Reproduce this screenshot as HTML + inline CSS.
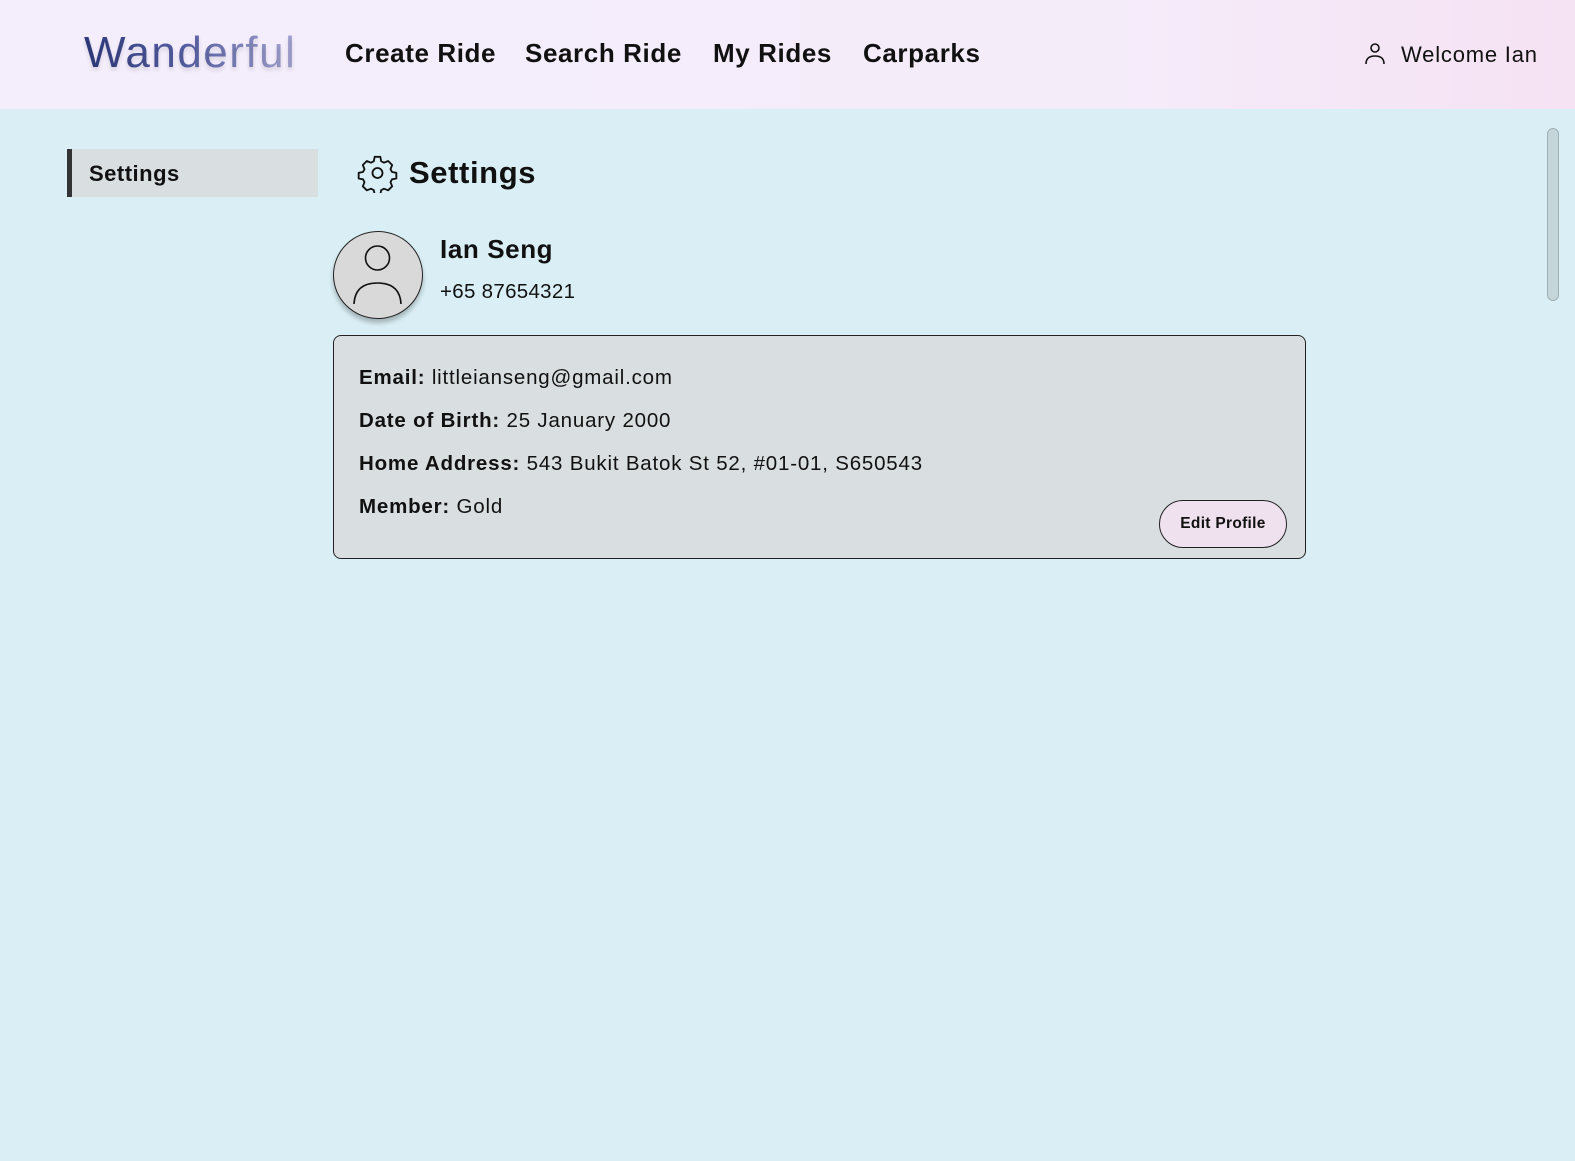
<!DOCTYPE html>
<html><head><meta charset="utf-8"><style>
*{margin:0;padding:0;box-sizing:border-box}
body{width:1575px;height:1161px;background:#d9eff5;font-family:"Liberation Sans",sans-serif;color:#111;position:relative;overflow:hidden}
.hdr{position:absolute;left:0;top:0;width:1575px;height:109px;background:linear-gradient(90deg,#f4eefc 0%,#f5ecfa 70%,#f5e2f3 100%)}
.abs{position:absolute;white-space:nowrap}
.logo{left:84px;top:28px;font-size:44px;letter-spacing:1.5px;background:linear-gradient(90deg,#2f3b80,#5a63a8 50%,#a9a9d6);-webkit-background-clip:text;color:transparent;text-shadow:0 3px 4px rgba(0,0,0,0.12)}
.nav{top:38px;font-size:26px;font-weight:bold;color:#111;letter-spacing:0.6px}
.side{left:67px;top:149px;width:251px;height:48px;background:#d9dee0;border-left:5px solid #333}
.side span{position:absolute;left:17px;top:12px;font-size:22px;font-weight:bold;letter-spacing:0.5px}
.card{left:333px;top:335px;width:973px;height:224px;background:#d9dee0;border:1.5px solid #222;border-radius:8px}
.row{left:359px;font-size:20.5px;letter-spacing:0.8px}
.row b{font-weight:bold}
.btn{left:1159px;top:500px;width:128px;height:48px;border:1.5px solid #222;border-radius:24px;background:#efe1ee;font-size:15.5px;font-weight:bold;text-align:center;line-height:45px;letter-spacing:0.3px}
.av{left:333px;top:231px;width:90px;height:88px;border-radius:50%;background:#d9d9d9;border:1.5px solid #222;box-shadow:0 4px 5px rgba(0,0,0,0.25)}
.sb{left:1547px;top:128px;width:12px;height:173px;background:#c5d6da;border:1px solid #9fb0b5;border-radius:6px}
</style></head><body>
<div class="hdr"></div>
<div class="abs logo">Wanderful</div>
<div class="abs nav" style="left:345px">Create Ride</div>
<div class="abs nav" style="left:525px">Search Ride</div>
<div class="abs nav" style="left:713px">My Rides</div>
<div class="abs nav" style="left:863px">Carparks</div>
<svg class="abs" style="left:1364px;top:42px" width="22" height="24" viewBox="0 0 22 24" fill="none" stroke="#111" stroke-width="1.6"><circle cx="11" cy="6" r="4"/><path d="M2 22 Q2 14 11 14 Q20 14 20 22"/></svg>
<div class="abs" style="left:1401px;top:42px;font-size:22px;letter-spacing:0.8px">Welcome Ian</div>
<div class="sb abs"></div>
<div class="abs side"><span>Settings</span></div>
<svg class="abs" style="left:357px;top:153px" width="41" height="40" viewBox="0 0 24 24" fill="none" stroke="#111" stroke-width="1.1" stroke-linejoin="round"><path d="M10.3 2.3h3.4l.5 2.6 1.7.9 2.5-1 2.4 2.4-1 2.5.9 1.7 2.6.5v3.4l-2.6.5-.9 1.7 1 2.5-2.4 2.4-2.5-1-1.7.9-.5 2.6h-3.4l-.5-2.6-1.7-.9-2.5 1-2.4-2.4 1-2.5-.9-1.7-2.6-.5v-3.4l2.6-.5.9-1.7-1-2.5 2.4-2.4 2.5 1 1.7-.9z"/><circle cx="12" cy="12" r="3"/></svg>
<div class="abs" style="left:409px;top:155px;font-size:31px;font-weight:bold;letter-spacing:0.6px">Settings</div>
<div class="abs av"></div>
<svg class="abs" style="left:333px;top:231px" width="90" height="88" viewBox="0 0 90 88" fill="none" stroke="#111" stroke-width="1.6"><circle cx="44.5" cy="27" r="12"/><path d="M21 73 Q22 52 44.5 52 Q67 52 68 73"/></svg>
<div class="abs" style="left:440px;top:234px;font-size:26px;font-weight:bold;letter-spacing:0.6px">Ian Seng</div>
<div class="abs" style="left:440px;top:280px;font-size:20.5px;letter-spacing:0.3px">+65 87654321</div>
<div class="abs card"></div>
<div class="abs row" style="top:366px"><b>Email:</b> littleianseng@gmail.com</div>
<div class="abs row" style="top:409px"><b>Date of Birth:</b> 25 January 2000</div>
<div class="abs row" style="top:452px"><b>Home Address:</b> 543 Bukit Batok St 52, #01-01, S650543</div>
<div class="abs row" style="top:495px"><b>Member:</b> Gold</div>
<div class="abs btn">Edit Profile</div>
</body></html>
